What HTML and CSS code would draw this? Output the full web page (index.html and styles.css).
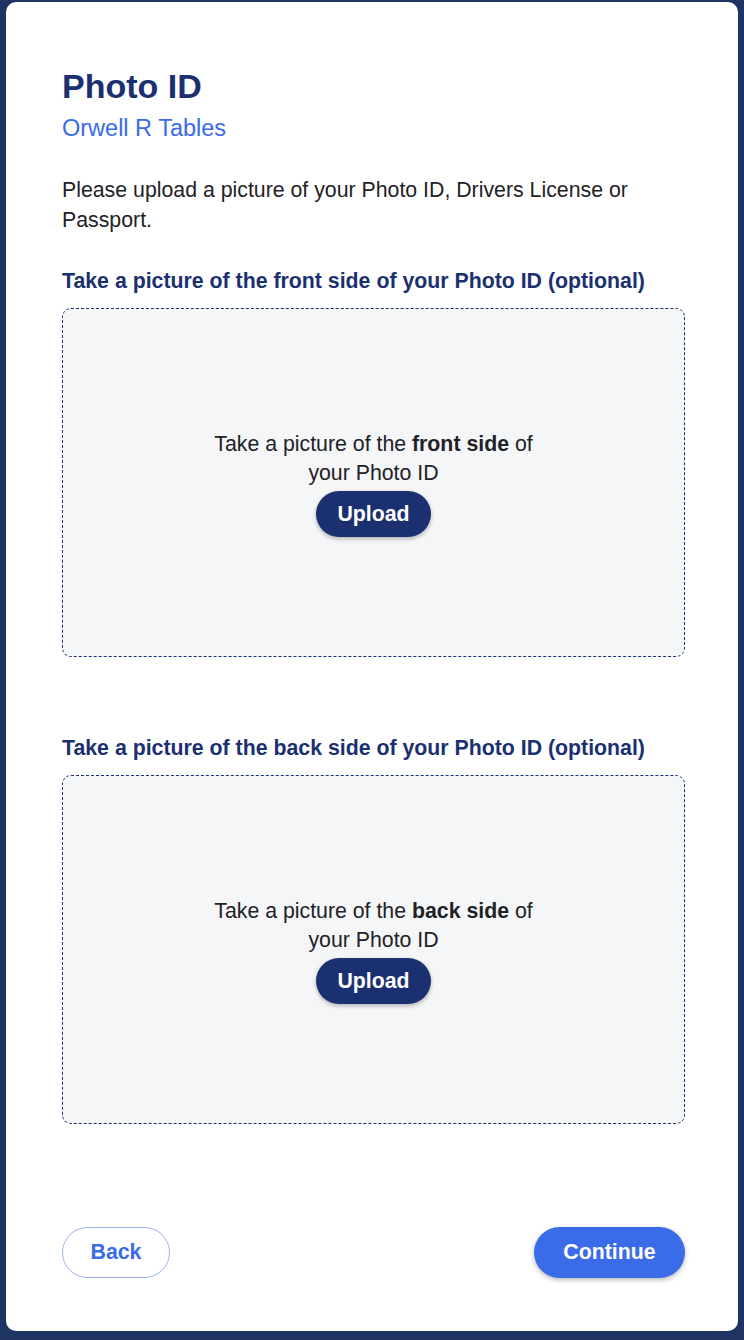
FILE: index.html
```html
<!DOCTYPE html>
<html lang="en">
<head>
<meta charset="utf-8">
<title>Photo ID</title>
<link rel="stylesheet" href="styles.css">
</head>
<body>
<main class="card">
  <h1 class="title">Photo ID</h1>
  <p class="subtitle">Orwell R Tables</p>
  <p class="intro">Please upload a picture of your Photo ID, Drivers License or Passport.</p>

  <section class="section">
    <h2 class="section-title">Take a picture of the front side of your Photo ID (optional)</h2>
    <div class="dropzone">
      <p class="drop-text">Take a picture of the <strong>front side</strong> of<br>your Photo ID</p>
      <button class="btn btn-upload" type="button">Upload</button>
    </div>
  </section>

  <section class="section section-back">
    <h2 class="section-title">Take a picture of the back side of your Photo ID (optional)</h2>
    <div class="dropzone">
      <p class="drop-text">Take a picture of the <strong>back side</strong> of<br>your Photo ID</p>
      <button class="btn btn-upload" type="button">Upload</button>
    </div>
  </section>

  <div class="actions">
    <button class="btn btn-back" type="button">Back</button>
    <button class="btn btn-continue" type="button">Continue</button>
  </div>
</main>
</body>
</html>
```

FILE: styles.css
```css
* {
  box-sizing: border-box;
}

html, body {
  margin: 0;
  padding: 0;
}

body {
  background: #1e3462;
  font-family: "Liberation Sans", Arial, Helvetica, sans-serif;
  height: 1340px;
  overflow: hidden;
}

.card {
  margin: 2px 6px 0 6px;
  height: 1329px;
  background: #ffffff;
  border-radius: 10px;
  padding: 64px 53px 0 56px;
  display: flex;
  flex-direction: column;
}

.title {
  margin: 0;
  font-size: 34px;
  line-height: 40px;
  font-weight: 700;
  color: #1b3070;
}

.subtitle {
  margin: 8px 0 0;
  font-size: 23.5px;
  line-height: 28px;
  color: #3a6be8;
}

.intro {
  margin: 33px 0 0;
  font-size: 21.3px;
  line-height: 30px;
  color: #222226;
}

.section {
  margin-top: 32px;
}

.section-back {
  margin-top: 77px;
}

.section-title {
  margin: 0;
  font-size: 21.3px;
  line-height: 28px;
  font-weight: 700;
  color: #1b3070;
}

.dropzone {
  margin-top: 13px;
  height: 349px;
  padding-top: 2px;
  background: #f5f6f8;
  border: 1px dashed #1b3070;
  border-radius: 9px;
  display: flex;
  flex-direction: column;
  align-items: center;
  justify-content: center;
  gap: 3px;
}

.drop-text {
  margin: 0;
  text-align: center;
  font-size: 21.3px;
  line-height: 29px;
  color: #222226;
}

.drop-text strong {
  font-weight: 700;
}

.btn {
  font-family: "Liberation Sans", Arial, Helvetica, sans-serif;
  font-weight: 700;
  font-size: 21.3px;
  border-radius: 999px;
  cursor: pointer;
  border: none;
}

.btn-upload {
  height: 46px;
  padding: 0 21px;
  background: #1b3070;
  color: #ffffff;
  box-shadow: 0 2px 4px rgba(0, 0, 0, 0.28);
}

.actions {
  margin-top: 103px;
  display: flex;
  justify-content: space-between;
  align-items: center;
}

.btn-back {
  width: 108px;
  height: 51px;
  background: #ffffff;
  color: #3a6be8;
  border: 1px solid #9bb4f2;
}

.btn-continue {
  width: 151px;
  height: 51px;
  background: #3a6be8;
  color: #ffffff;
  box-shadow: 0 2px 5px rgba(0, 0, 0, 0.28);
}
```
